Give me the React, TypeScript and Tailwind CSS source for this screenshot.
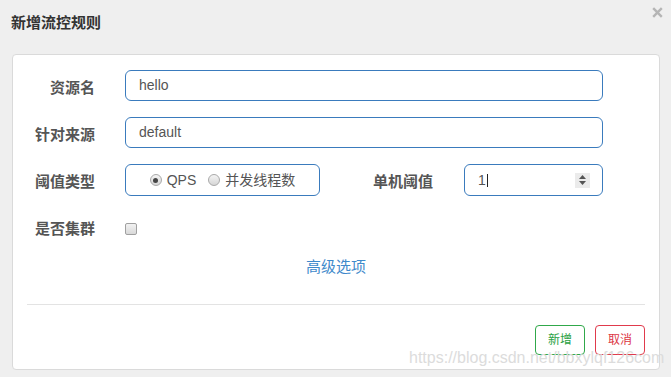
import React from "react";

const font = { fontFamily: '"Liberation Sans", "Noto Sans CJK SC", sans-serif' };

function Label({ children, w }: { children: React.ReactNode; w: string }) {
  return (
    <div className={`${w} shrink-0 text-right text-[15px] font-bold text-[#555] leading-[20px] pt-[4px]`}>
      {children}
    </div>
  );
}

function Radio({ checked }: { checked?: boolean }) {
  return (
    <span className="relative inline-flex w-[12px] h-[12px] rounded-full border border-[#a9a9a9] bg-gradient-to-b from-[#f4f4f4] to-[#d6d6d6] items-center justify-center">
      {checked && <span className="w-[5px] h-[5px] rounded-full bg-[#444]" />}
    </span>
  );
}

export default function App() {
  return (
    <div className="relative w-[671px] h-[377px] bg-[#efefef] overflow-hidden" style={font}>
      {/* header */}
      <div className="h-[54px] pl-[11px] pt-[13px]">
        <div className="text-[15px] font-bold text-[#333] leading-[19px]">新增流控规则</div>
      </div>
      <div className="absolute left-[652px] top-[7px]">
        <svg width="11" height="11" viewBox="0 0 11 11">
          <path d="M1.2 1.2 L9.8 9.8 M9.8 1.2 L1.2 9.8" stroke="#b5b5b5" strokeWidth="2.4" strokeLinecap="butt" />
        </svg>
      </div>

      {/* card */}
      <div className="ml-[12px] w-[648px] h-[316px] bg-white border border-[#dadada] rounded-[4px] pt-[15px]">
        {/* row 1 */}
        <div className="flex items-center gap-[30px]">
          <Label w="w-[82px]">资源名</Label>
          <div className="w-[478px] h-[31px] border border-[#3a7bbd] rounded-[6px] flex items-center pl-[13px] text-[14px] text-[#555]">
            hello
          </div>
        </div>
        {/* row 2 */}
        <div className="flex items-center gap-[30px] mt-[16px]">
          <Label w="w-[82px]">针对来源</Label>
          <div className="w-[478px] h-[31px] border border-[#3a7bbd] rounded-[6px] flex items-center pl-[13px] text-[14px] text-[#555]">
            default
          </div>
        </div>
        {/* row 3 */}
        <div className="flex items-center mt-[16px]">
          <Label w="w-[82px]">阈值类型</Label>
          <div className="ml-[30px] w-[195px] h-[32px] border border-[#3a7bbd] rounded-[6px] flex items-center justify-center text-[14px] text-[#555]">
            <Radio checked />
            <span className="ml-[5px]">QPS</span>
            <span className="ml-[12px] flex items-center">
              <Radio />
            </span>
            <span className="ml-[5px]">并发线程数</span>
          </div>
          <Label w="w-[113px]">单机阈值</Label>
          <div className="ml-[31px] w-[139px] h-[32px] border border-[#3a7bbd] rounded-[6px] flex items-center pl-[13px] pr-[12px] text-[14px] text-[#555]">
            <span>1</span>
            <span className="ml-[1px] w-[1px] h-[13px] bg-[#222]" />
            <span className="ml-auto w-[15px] h-[15px] bg-[#ebebeb] flex flex-col items-center justify-center gap-[2px]">
              <svg width="7" height="4" viewBox="0 0 7 4"><path d="M3.5 0 L7 4 L0 4 Z" fill="#555" /></svg>
              <svg width="7" height="4" viewBox="0 0 7 4"><path d="M0 0 L7 0 L3.5 4 Z" fill="#555" /></svg>
            </span>
          </div>
        </div>
        {/* row 4 */}
        <div className="flex items-center gap-[30px] mt-[23px] h-[20px]">
          <div className="w-[82px] shrink-0 text-right text-[15px] font-bold text-[#555] leading-[20px]">是否集群</div>
          <span className="w-[12px] h-[12px] rounded-[2px] border border-[#a0a0a0] bg-gradient-to-b from-[#f2f2f2] to-[#d9d9d9]" />
        </div>
        {/* advanced */}
        <div className="mt-[18px] h-[20px] leading-[20px] text-center text-[15px] text-[#3f8acb]">
          高级选项
        </div>
        {/* hr */}
        <div className="mt-[27px] mx-[14px] h-px bg-[#e3e3e3]" />
        {/* buttons */}
        <div className="mt-[20px] mr-[14px] flex justify-end gap-[10px]">
          <div className="w-[50px] h-[30px] border border-[#30a84a] rounded-[4px] flex items-center justify-center text-[12px] text-[#2aa144]">
            新增
          </div>
          <div className="w-[50px] h-[30px] border border-[#e03a4c] rounded-[4px] flex items-center justify-center text-[12px] text-[#dc3545]">
            取消
          </div>
        </div>
      </div>

      {/* watermark */}
      <div className="absolute left-[409px] top-[350px] text-[16px] leading-[16px] text-[#dcdcdc] whitespace-nowrap" style={{ fontFamily: '"Liberation Sans", sans-serif' }}>
        https://blog.csdn.net/bbxylqf126com
      </div>
    </div>
  );
}
